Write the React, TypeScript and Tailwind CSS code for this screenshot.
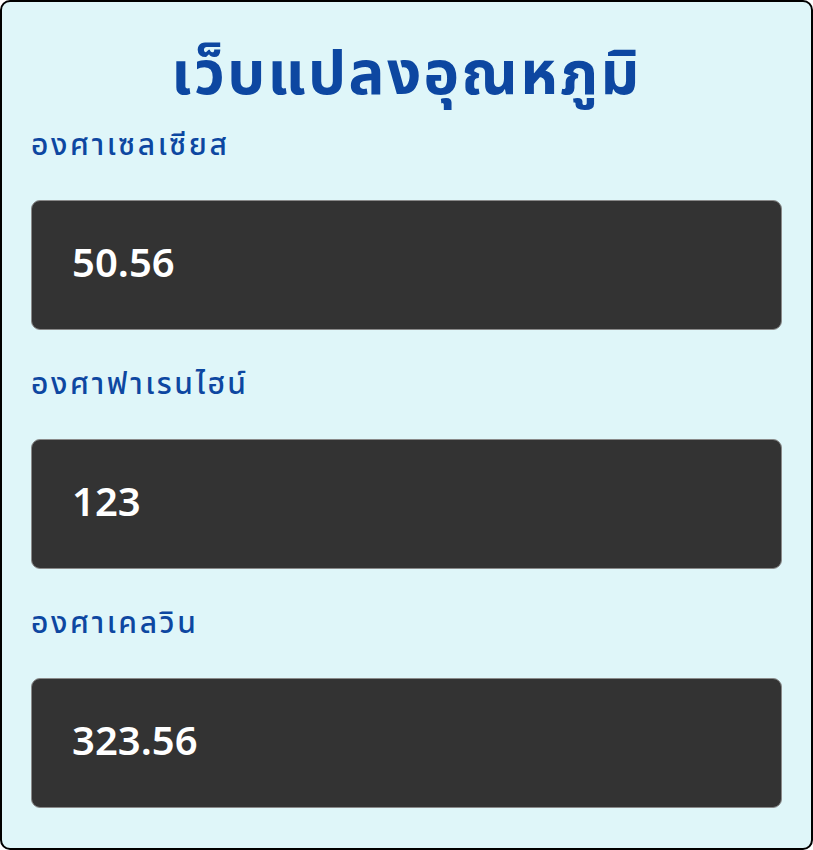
import React from "react";

const fields = [
  { label: "องศาเซลเซียส", value: "50.56" },
  { label: "องศาฟาเรนไฮน์", value: "123" },
  { label: "องศาเคลวิน", value: "323.56" },
];

export default function App() {
  return (
    <div
      className="w-[813px] h-[850px] bg-white"
      style={{ fontFamily: '"Noto Sans Thai", "Noto Sans", "Noto Sans CJK SC", sans-serif' }}
    >
      <div className="w-[813px] h-[850px] border-2 border-black rounded-[10px] bg-[#dff6f9] px-[29px] flex flex-col">
        <h1 className="text-center text-[60px] leading-[56px] font-bold tracking-[2.4px] text-[#0d47a1] mt-[46px] mb-[25px]">
          เว็บแปลงอุณหภูมิ
        </h1>
        {fields.map((f) => (
          <div key={f.label} className="flex flex-col">
            <div className="text-[30px] leading-[34px] font-medium tracking-[2.6px] text-[#0d47a1] h-[34px] flex items-center">
              {f.label}
            </div>
            <div className="mt-[37px] mb-[38px] h-[130px] rounded-[9px] bg-[#333333] border border-[#8a8a8a] flex items-center px-[40px]">
              <span className="text-white text-[40px] font-semibold">{f.value}</span>
            </div>
          </div>
        ))}
      </div>
    </div>
  );
}
